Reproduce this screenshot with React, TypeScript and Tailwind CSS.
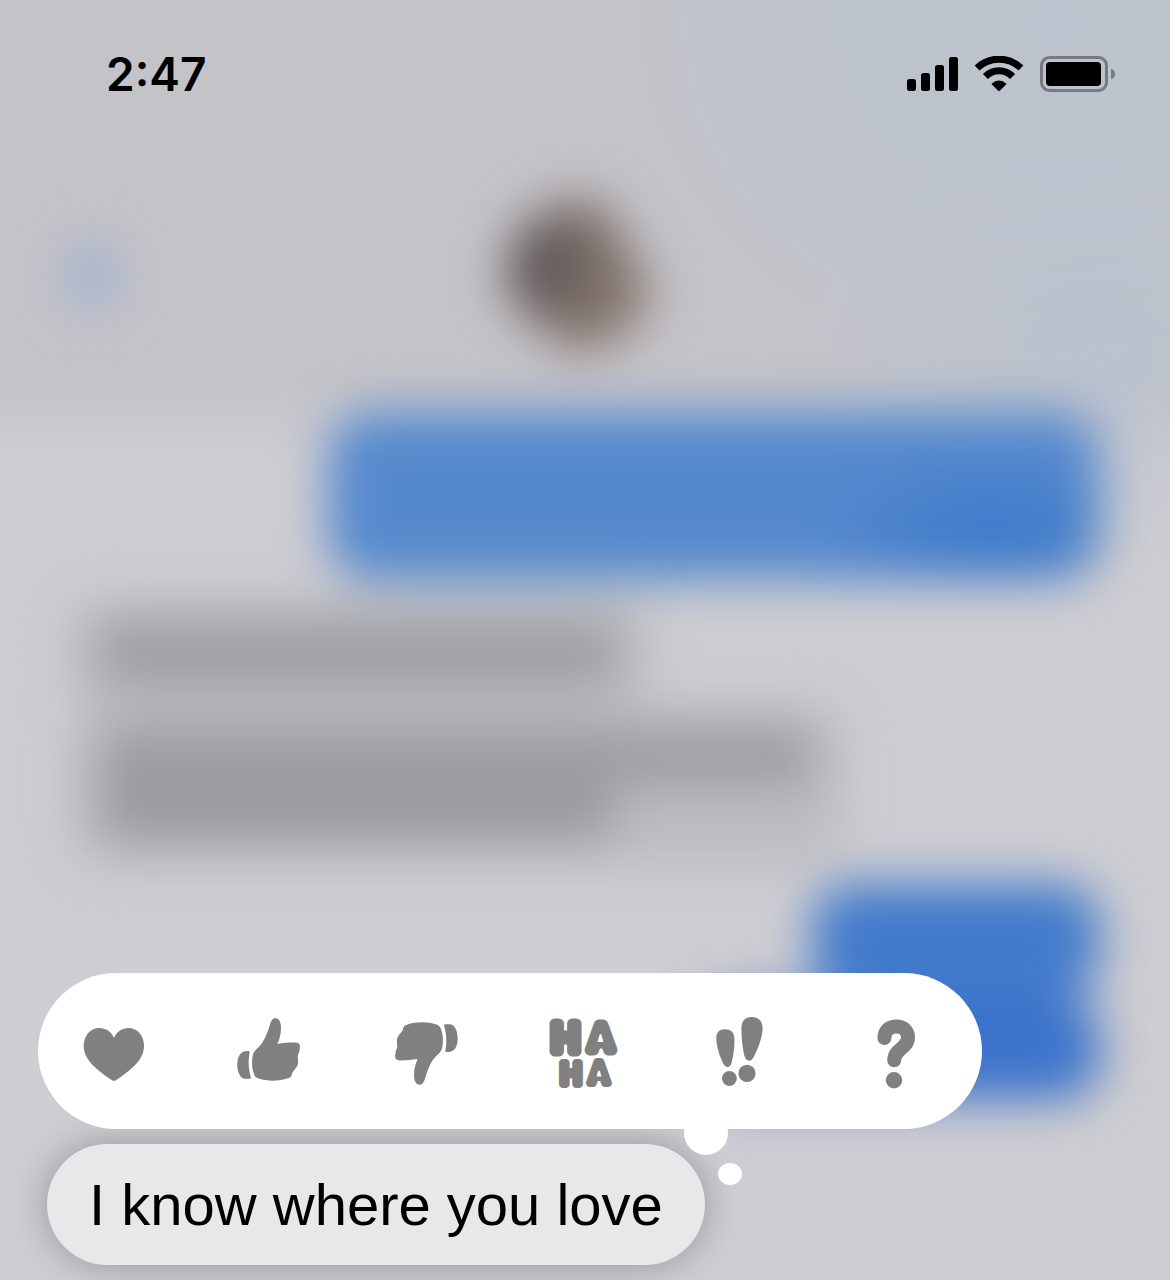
import React from "react";

function SignalIcon() {
  return (
    <svg width="51" height="34" viewBox="0 0 51 34" aria-label="Signal strength">
      <rect x="0" y="22" width="9" height="12" rx="2.5" />
      <rect x="14" y="16" width="9" height="18" rx="2.5" />
      <rect x="28" y="8" width="9" height="26" rx="2.5" />
      <rect x="42" y="0" width="9" height="34" rx="2.5" />
    </svg>
  );
}

function WifiIcon() {
  return (
    <svg width="50" height="36" viewBox="0 0 50 36" aria-label="Wi-Fi">
      <g fill="none" stroke="#000" strokeWidth="7">
        <path d="M3.100 12a31.500 31.500 0 0 1 43.800 0" />
        <path d="M11.400 20.500a19 19 0 0 1 27.200 0" />
      </g>
      <path d="M17.900 27.400a10.100 10.100 0 0 1 14.200 0q.6.6 0 1.200l-6.300 6.100q-.8.7-1.600 0l-6.300-6.100q-.6-.6 0-1.200z" />
    </svg>
  );
}

function BatteryIcon() {
  return (
    <svg width="75" height="36" viewBox="0 0 75 36" aria-label="Battery full">
      <rect x="1.5" y="1.5" width="65" height="33" rx="8" fill="none" stroke="#777a82" strokeWidth="3" />
      <rect x="6" y="6" width="55" height="24" rx="4" />
      <path d="M71 12.500c2.600 1 4 3 4 5.500s-1.400 4.500-4 5.500z" fill="#777a82" />
    </svg>
  );
}

const THUMB = (
  <>
    <path d="M45.500 7.300C42.500 7.300 41 10 40 13.500C38.800 17.500 37.800 20.500 36.300 24C34.300 28.500 32.500 32 29.500 35.200C26.500 38 23.700 40.500 22.800 44C21.600 50 21.700 57 24 63C24.800 65.500 26 66.700 28.500 67.600C38 70.500 49 70.300 58 67.300C61 66.200 61.300 65.500 62 63C63 59 67.400 57.500 68 52.300C68.600 49 67.200 46.500 68 44C68.600 41.800 69.400 41.500 69.400 39.500C69.500 38.600 69.800 38.500 69.900 36C70 33 68.500 31.700 65.500 31.600C59 31.500 53 32 47.400 33C49.500 28.500 51 23 51 17C51 11 49 7.300 45.500 7.300Z" />
    <path d="M19.600 41.800C20.100 40.300 19.300 39.900 17.500 39.900C10.500 39.500 7.300 45.500 7.300 53.500C7.300 61.500 10.500 67.800 15.500 67.800L19 67.800C20.700 67.800 21.200 67.200 20.700 65.500C18.600 58.500 18 49.500 19.600 41.800Z" />
  </>
);

const REACTIONS = [
  {
    label: "Love",
    art: (
      <path d="M40 27C37.500 20.500 31.500 17 25.500 17C16 17 9.700 25 9.700 35C9.700 49 23 59 38 69.200Q40 70.400 42 69.200C57 59 70 49 70 35C70 25 63.500 17 54.500 17C48.500 17 42.500 20.500 40 27Z" />
    ),
  },
  { label: "Like", art: THUMB },
  { label: "Dislike", art: <g transform="rotate(180 39 40.500)">{THUMB}</g> },
  {
    label: "Laugh",
    art: (
      <>
        <g
          fontFamily="Inter, sans-serif"
          fontWeight="400"
          textAnchor="middle"
          stroke="#808080"
          strokeLinejoin="round"
        >
          <text y="40" fontSize="37" strokeWidth="11">
            <tspan x="22.500">H</tspan>
            <tspan x="58" y="39" fontSize="34" strokeWidth="11">A</tspan>
          </text>
          <text y="73" fontSize="28" strokeWidth="8">
            <tspan x="28">H</tspan>
            <tspan x="56" y="72" fontSize="28" strokeWidth="8">A</tspan>
          </text>
        </g>
        <path d="M56.500 24Q57.500 22 58.500 24L60.500 31H54.500Z" fill="#fff" />
        <path d="M55 60.500Q56 58.500 57 60.500L58.500 65.500H53.500Z" fill="#fff" />
      </>
    ),
  },
  {
    label: "Emphasize",
    art: (
      <>
        <path d="M24.500 18.200C19 18.500 16 21.500 16.300 28C16.700 37 20 45.500 23 52C25.500 57.500 30 57.500 31.500 52C33.700 44 34.800 35 34.400 27C34 21 30.500 18 24.500 18.200Z" />
        <circle cx="29.400" cy="67.500" r="7.400" />
        <path d="M51.500 5.900C45 5.900 41.300 10 41.400 17.500C41.500 28 42.500 37 44.300 44.500C46 51 51 51.500 54 45.500C57.500 38.500 62 28 62.600 18.500C63 10.500 59 5.900 51.500 5.900Z" />
        <circle cx="47" cy="62.400" r="8.600" />
      </>
    ),
  },
  {
    label: "Question",
    art: (
      <>
        <path
          d="M28.400 27C28.400 19.500 33.500 15.600 40.500 15.600C47.500 15.600 52 20 52 26.500C52 37 38.200 38 38.200 49.300"
          fill="none"
          stroke="#808080"
          strokeWidth="14"
          strokeLinecap="round"
        />
        <circle cx="38" cy="69.300" r="8.200" />
      </>
    ),
  },
];

function BlurredConversation() {
  return (
    <div
      aria-hidden="true"
      className="absolute inset-0 overflow-hidden bg-linear-to-b from-[#c4c3c8] from-30% to-[#cecdd2] to-36%"
    >
      <div className="absolute inset-0 bg-[radial-gradient(ellipse_500px_420px_at_90%_2%,#bcc3ce_0%,#bcc3cecc_40%,#bcc3ce00_100%)]" />
      <div className="absolute inset-0 bg-[radial-gradient(ellipse_300px_220px_at_94%_28%,#b8c1d0aa_0%,#b8c1d000_100%)]" />
      <div className="relative flex flex-col blur-[24px]">
        <div className="flex h-[412px] items-center justify-between px-[62px] pt-[138px]">
          <div className="h-[70px] w-[60px] rounded-full bg-[#a6b3ce]" />
          <div className="mr-[30px] h-[150px] w-[148px] rounded-full bg-[radial-gradient(circle_at_22%_42%,#4c494b_0%,#766965_32%,#84766f_60%,#8d7d75_75%,#aaa3a4_100%)] [clip-path:polygon(0_20%,25%_0,65%_0,100%_60%,90%_100%,40%_100%,0_65%)]" />
          <div className="w-10" />
        </div>
        <div className="flex flex-col px-[70px]">
          <div className="h-[168px] w-[75%] self-end rounded-[44px] bg-[radial-gradient(ellipse_180px_90px_at_86%_76%,#3c78ca_0%,#5589cd_100%)]" />
          <div className="mt-5 w-[56%] rounded-[36px] bg-[#b9b8bd] px-8 py-6">
            <div className="h-14 rounded-xl bg-[#9d9ca1]" />
          </div>
          <div className="w-[75%] rounded-[36px] bg-[#bcbbc0] px-8 py-6">
            <div className="h-14 rounded-t-xl bg-[#9d9ca1]" />
            <div className="h-14 w-[72%] rounded-b-xl bg-[#9a999e]" />
          </div>
          <div className="mt-5 h-28 w-[28%] self-end rounded-[40px] bg-[#427acb]" />
          <div className="h-[104px] w-[39%] self-end rounded-[40px] bg-[#3c73cb]" />
        </div>
      </div>
    </div>
  );
}

export default function App() {
  return (
    <div className="relative min-h-screen font-['Inter',sans-serif] text-black">
      <BlurredConversation />
      <div className="relative flex min-h-screen flex-col justify-between">
        <header className="flex h-[148px] items-center justify-between pr-[55px] pl-[106px]">
          <time className="text-[46px] leading-none font-semibold">2:47</time>
          <div className="flex items-center gap-4">
            <SignalIcon />
            <WifiIcon />
            <BatteryIcon />
          </div>
        </header>

        <main className="flex flex-col items-start gap-[15px] pr-8 pb-[15px] pl-[38px]">
          <div className="relative z-10 w-full max-w-[944px]">
            <div className="absolute right-[254px] -bottom-[26px] size-11 rounded-full bg-white" />
            <div className="absolute right-[240px] -bottom-14 h-[22px] w-6 rounded-[50%] bg-white" />
            <div
              role="toolbar"
              aria-label="Reactions"
              className="relative flex h-[156px] items-center justify-between rounded-full bg-white pr-[46px] pl-9"
            >
              {REACTIONS.map(({ label, art }) => (
                <button key={label} type="button" aria-label={label} className="size-20">
                  <svg viewBox="0 0 80 80" className="size-20 overflow-visible" fill="#808080">
                    {art}
                  </svg>
                </button>
              ))}
            </div>
          </div>
          <p className="ml-[9px] flex h-[121px] items-center rounded-full bg-[#e8e8ea] px-[42px] font-['Liberation_Sans',sans-serif] text-[58px] leading-none whitespace-nowrap shadow-[0_0_36px_rgba(0,0,0,0.28)]">
            I know where you love
          </p>
        </main>
      </div>
    </div>
  );
}
